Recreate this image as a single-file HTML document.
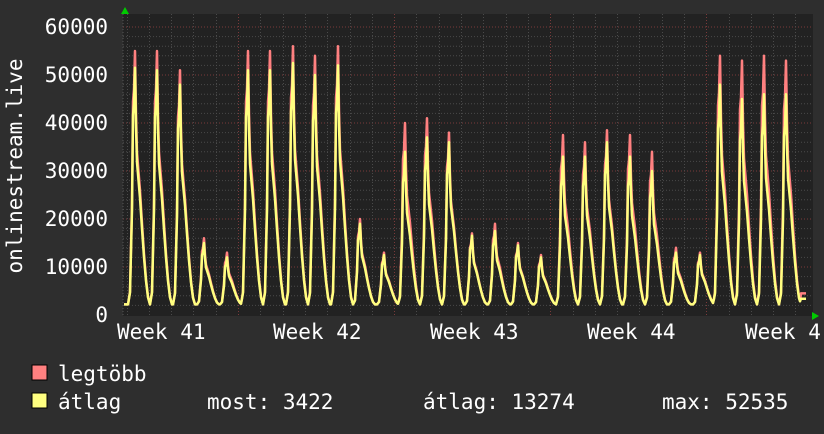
<!DOCTYPE html><html><head><meta charset="utf-8"><style>
body{margin:0;width:824px;height:430px;background:#2e2e2e;overflow:hidden;font-family:"DejaVu Sans Mono","Liberation Mono",monospace;}
</style></head><body>
<svg id="s" width="824" height="430" xmlns="http://www.w3.org/2000/svg" font-family="DejaVu Sans Mono, Liberation Mono, monospace" font-size="21" fill="#fff">
<rect x="123" y="14" width="690" height="302" fill="#222"/>
<g id="grid"></g>
<g id="data"></g>
<polygon points="121,14 125,7 129,14" fill="#0c0"/>
<polygon points="812,312 819,316 812,320" fill="#0c0"/>
<g text-anchor="end">
<text x="108" y="34">60000</text><text x="108" y="82">50000</text><text x="108" y="130">40000</text><text x="108" y="178">30000</text><text x="108" y="226">20000</text><text x="108" y="274">10000</text><text x="108" y="322">0</text>
</g>
<text transform="translate(22,166) rotate(-90)" text-anchor="middle">onlinestream.live</text>
<text x="117" y="339">Week 41</text><text x="273" y="339">Week 42</text><text x="430" y="339">Week 43</text><text x="587" y="339">Week 44</text><text x="745" y="339">Week 4</text>
<rect x="32" y="365" width="15" height="15" fill="#ff8080" stroke="#000"/>
<rect x="32" y="393" width="15" height="15" fill="#ffff80" stroke="#000"/>
<text x="58" y="381">legtöbb</text>
<text x="58" y="409">átlag</text>
<text x="207" y="409">most: 3422</text>
<text x="423" y="409">átlag: 13274</text>
<text x="662" y="409">max: 52535</text>
</svg>
<script>
var ns="http://www.w3.org/2000/svg",g=document.getElementById('grid'),d=document.getElementById('data');
function ln(x1,y1,x2,y2,c){var l=document.createElementNS(ns,'line');l.setAttribute('x1',x1);l.setAttribute('y1',y1);l.setAttribute('x2',x2);l.setAttribute('y2',y2);l.setAttribute('stroke',c);l.setAttribute('stroke-dasharray','1,2');g.appendChild(l);}
function Y(v){return 315-v*0.0048;}
for(var v=2000;v<=60000;v+=2000){ln(123,Y(v),813,Y(v),v%10000==0?'#7a3a3a':'#4a4a4a');}
for(var x=126.5;x<813;x+=22.3){var maj=[238,394,550,706].some(function(m){return Math.abs(m-x)<3});ln(Math.round(x)+.5,14,Math.round(x)+.5,316,maj?'#7a3a3a':'#4a4a4a');}
ln(123,14,123,316,'#555');
var pk=[[135,55,51.5],[157,55,51],[180,51,48],[204,16,15],[227,13,12],[248,55,51],[270,55,51],[293,56,52.5],[315,54,50],[338,56,52],[360,20,19],[384,13,12.5],[405,40,34],[427,41,37],[449,38,36],[472,17,16.5],[495,19,17.5],[518,15,14.5],[541,12.5,12],[563,37.5,33],[585,36,33],[607,38.5,36],[630,37.5,33],[652,34,30],[676,14,13],[700,13,12.5],[720,54,48],[742,53,45],[764,54,46],[786,53,46]];
var prof=[[-7,0],[-5,.05],[-3,.4],[-2,.8],[-1,.85],[0,1],[1,.75],[2,.6],[3,.55],[5,.45],[7,.32],[9,.2],[11,.1],[13,.03],[15,0]];
function val(x,k){var base=2200,best=base;pk.forEach(function(p){var dx=x-p[0];if(dx<-7||dx>15)return;var f=0;for(var i=0;i<prof.length-1;i++){var a=prof[i],b=prof[i+1];if(dx>=a[0]&&dx<=b[0]){f=a[1]+(b[1]-a[1])*(dx-a[0])/(b[0]-a[0]);break;}}var v=base+(p[k]*1000-base)*f;if(v>best)best=v;});return best;}
function path(k,c){var s='';for(var x=124;x<=806;x++){var v=val(x,k);if(x>800)v=k==1?4500:3400;s+=(x==124?'M':'L')+x+','+Y(v).toFixed(1);}var p=document.createElementNS(ns,'path');p.setAttribute('d',s);p.setAttribute('fill','none');p.setAttribute('stroke',c);p.setAttribute('stroke-width','2.5');p.setAttribute('stroke-linejoin','round');d.appendChild(p);}
path(1,'#ff8080');path(2,'#ffff80');
</script>
</body></html>
